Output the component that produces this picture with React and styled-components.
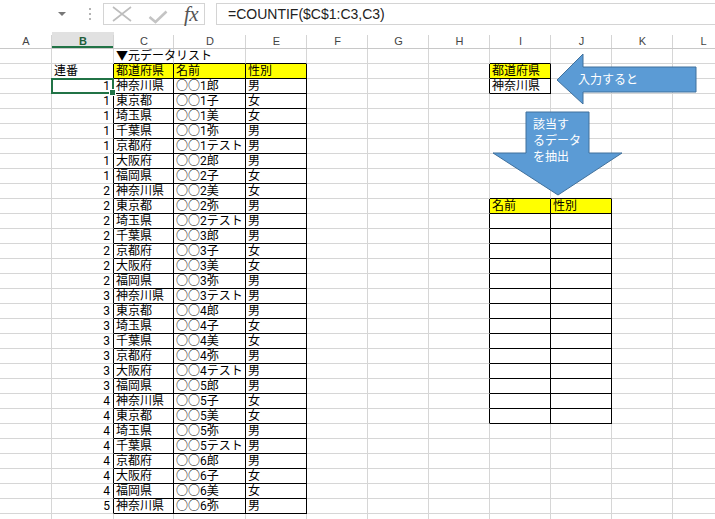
import React from 'react'
import styled, { createGlobalStyle } from 'styled-components'

const COLS = [52, 62, 60, 72, 61, 61, 61, 61, 61, 61, 61, 61]
const LETTERS = ['A', 'B', 'C', 'D', 'E', 'F', 'G', 'H', 'I', 'J', 'K', 'L']
const TEMPLATE = COLS.map((w) => w + 'px').join(' ')
const ROWS = 32
const GRID = '#d6d6d6'
const CELL_FONT = 'Roboto, "Noto Sans CJK JP", sans-serif'

const DATA = [
  [1, '神奈川県', '○○1郎', '男'],
  [1, '東京都', '○○1子', '女'],
  [1, '埼玉県', '○○1美', '女'],
  [1, '千葉県', '○○1弥', '男'],
  [1, '京都府', '○○1テスト', '男'],
  [1, '大阪府', '○○2郎', '男'],
  [1, '福岡県', '○○2子', '女'],
  [2, '神奈川県', '○○2美', '女'],
  [2, '東京都', '○○2弥', '男'],
  [2, '埼玉県', '○○2テスト', '男'],
  [2, '千葉県', '○○3郎', '男'],
  [2, '京都府', '○○3子', '女'],
  [2, '大阪府', '○○3美', '女'],
  [2, '福岡県', '○○3弥', '男'],
  [3, '神奈川県', '○○3テスト', '男'],
  [3, '東京都', '○○4郎', '男'],
  [3, '埼玉県', '○○4子', '女'],
  [3, '千葉県', '○○4美', '女'],
  [3, '京都府', '○○4弥', '男'],
  [3, '大阪府', '○○4テスト', '男'],
  [3, '福岡県', '○○5郎', '男'],
  [4, '神奈川県', '○○5子', '女'],
  [4, '東京都', '○○5美', '女'],
  [4, '埼玉県', '○○5弥', '男'],
  [4, '千葉県', '○○5テスト', '男'],
  [4, '京都府', '○○6郎', '男'],
  [4, '大阪府', '○○6子', '女'],
  [4, '福岡県', '○○6美', '女'],
  [5, '神奈川県', '○○6弥', '男'],
]

// sheet contents keyed by "row,col" (rows start at 1, col 0 = A)
const cells = {}
const put = (r, c, v) => {
  cells[`${r},${c}`] = v
}
put(1, 2, { text: '▼元データリスト' })
put(2, 1, { text: '連番' })
;['都道府県', '名前', '性別'].forEach((t, i) => put(2, 2 + i, { text: t, fill: true, boxed: true }))
DATA.forEach(([n, pref, name, sex], i) => {
  const r = 3 + i
  put(r, 1, { text: String(n), right: true })
  put(r, 2, { text: pref, boxed: true })
  put(r, 3, { text: name, boxed: true })
  put(r, 4, { text: sex, boxed: true })
})
put(2, 8, { text: '都道府県', fill: true, boxed: true })
put(3, 8, { text: '神奈川県', boxed: true })
put(11, 8, { text: '名前', fill: true, boxed: true })
put(11, 9, { text: '性別', fill: true, boxed: true })
for (let r = 12; r <= 25; r++) {
  put(r, 8, { text: '', boxed: true })
  put(r, 9, { text: '', boxed: true })
}
const boxed = (r, c) => Boolean(cells[`${r},${c}`] && cells[`${r},${c}`].boxed)

const GlobalStyle = createGlobalStyle`
  html, body {
    margin: 0;
    padding: 0;
    background: #fff;
  }
  body {
    width: 715px;
    height: 519px;
    overflow: hidden;
    font-family: ${CELL_FONT};
  }
`

const Page = styled.div`
  display: flex;
  flex-direction: column;
  width: 715px;
  height: 519px;
  overflow: hidden;
`

const FormulaBar = styled.div`
  display: flex;
  align-items: flex-start;
  height: 32px;
  padding-top: 3px;
  box-sizing: border-box;
  flex-shrink: 0;
`

const NameBox = styled.div`
  width: 76px;
  height: 22px;
  display: flex;
  align-items: center;
  justify-content: flex-end;
  padding-right: 10px;
  box-sizing: border-box;
`

const Grip = styled.div`
  width: 27px;
  height: 22px;
  display: flex;
  flex-direction: column;
  align-items: center;
  justify-content: center;
  gap: 3px;
`

const GripDot = styled.span`
  width: 2px;
  height: 2px;
  background: #b4b4b4;
`

const FuncBox = styled.div`
  width: 102px;
  height: 22px;
  border: 1px solid #d4d4d4;
  box-sizing: border-box;
  display: flex;
  align-items: center;
  padding-left: 8px;
  gap: 16px;
`

const Fx = styled.span`
  font-family: "Liberation Serif", serif;
  font-style: italic;
  font-size: 21px;
  line-height: 20px;
  color: #555;
  letter-spacing: -0.5px;
`

const FormulaInput = styled.div`
  margin-left: 11px;
  flex: 1;
  height: 22px;
  border: 1px solid #d4d4d4;
  border-right: none;
  box-sizing: border-box;
  padding-left: 11px;
  font-family: "Liberation Sans", Arial, sans-serif;
  font-size: 14px;
  line-height: 20px;
  color: #222;
  white-space: nowrap;
`

const HeaderRow = styled.div`
  display: grid;
  grid-template-columns: ${TEMPLATE};
  height: 17px;
  box-sizing: border-box;
  border-bottom: 1px solid #c8c8c8;
  flex-shrink: 0;
`

const HeaderCell = styled.div`
  position: relative;
  display: flex;
  align-items: center;
  justify-content: center;
  padding-top: 2px;
  font-family: "Liberation Sans", Arial, sans-serif;
  font-size: 11px;
  font-weight: ${(p) => (p.$active ? 'bold' : 'normal')};
  color: ${(p) => (p.$active ? '#1e5e3a' : '#444')};
  background: ${(p) => (p.$active ? '#e1e1e1' : '#fff')};
  box-shadow: ${(p) => (p.$active ? 'inset 0 -2px 0 #217346' : 'none')};
  &::after {
    content: '';
    position: absolute;
    right: 0;
    top: 3px;
    bottom: 0;
    width: 1px;
    background: #d4d4d4;
  }
`

const Body = styled.div`
  position: relative;
  display: grid;
  grid-template-columns: ${TEMPLATE};
  grid-auto-rows: 15px;
`

const Cell = styled.div`
  position: relative;
  box-sizing: border-box;
  border-right: 1px solid ${(p) => (p.$rb ? '#000' : GRID)};
  border-bottom: 1px solid ${(p) => (p.$bb ? '#000' : GRID)};
  background: ${(p) => (p.$fill ? '#ffff00' : 'transparent')};
  padding: 0 ${(p) => (p.$right ? '3px' : '0')} 0 2px;
  text-align: ${(p) => (p.$right ? 'right' : 'left')};
  font-family: ${CELL_FONT};
  font-size: 12px;
  line-height: 14px;
  white-space: nowrap;
  color: #000;
`

const Selection = styled.div`
  position: absolute;
  left: -1px;
  top: -1px;
  right: -1px;
  bottom: -1px;
  border: 2px solid #217346;
  pointer-events: none;
  z-index: 2;
  &::after {
    content: '';
    position: absolute;
    right: -4px;
    bottom: -4px;
    width: 5px;
    height: 5px;
    background: #217346;
    border: 1px solid #fff;
  }
`

const Shape = styled.div`
  position: absolute;
  left: ${(p) => p.$x}px;
  top: ${(p) => p.$y}px;
  width: ${(p) => p.$w}px;
  height: ${(p) => p.$h}px;
  z-index: 3;
  svg {
    position: absolute;
    inset: 0;
  }
`

const ShapeLabel = styled.div`
  position: absolute;
  left: ${(p) => p.$x}px;
  top: ${(p) => p.$y}px;
  color: #fff;
  font-family: ${CELL_FONT};
  font-size: 12px;
  line-height: 16px;
  white-space: nowrap;
`

const Arrow = ({ x, y, w, h, points, label, lx, ly }) => (
  <Shape $x={x} $y={y} $w={w} $h={h}>
    <svg width={w} height={h} viewBox={`0 0 ${w} ${h}`}>
      <polygon points={points} fill='#5b9bd5' stroke='#41719c' strokeWidth='1' />
    </svg>
    <ShapeLabel $x={lx} $y={ly}>
      {label.map((line) => (
        <div key={line}>{line}</div>
      ))}
    </ShapeLabel>
  </Shape>
)

const App = () => {
  const rows = []
  for (let r = 1; r <= ROWS; r++) {
    for (let c = 0; c < COLS.length; c++) {
      const cell = cells[`${r},${c}`] || {}
      rows.push(
        <Cell
          key={`${r}-${c}`}
          $rb={boxed(r, c) || boxed(r, c + 1)}
          $bb={boxed(r, c) || boxed(r + 1, c)}
          $fill={cell.fill}
          $right={cell.right}
        >
          {cell.text}
          {r === 3 && c === 1 && <Selection />}
        </Cell>
      )
    }
  }

  return (
    <Page>
      <GlobalStyle />
      <FormulaBar>
        <NameBox>
          <svg width='8' height='4' viewBox='0 0 8 4'>
            <polygon points='0,0 8,0 4,4' fill='#777' />
          </svg>
        </NameBox>
        <Grip>
          <GripDot />
          <GripDot />
          <GripDot />
        </Grip>
        <FuncBox>
          <svg width='20' height='16' viewBox='0 0 20 16'>
            <path d='M1 1 L19 15 M19 1 L1 15' stroke='#bdbdbd' strokeWidth='1.6' fill='none' />
          </svg>
          <svg width='20' height='14' viewBox='0 0 20 14' style={{ marginTop: 5 }}>
            <path d='M1.5 7 L7.5 12 L18.5 1.5' stroke='#c4c4c4' strokeWidth='2.6' fill='none' />
          </svg>
          <Fx>fx</Fx>
        </FuncBox>
        <FormulaInput>=COUNTIF($C$1:C3,C3)</FormulaInput>
      </FormulaBar>
      <HeaderRow>
        {LETTERS.map((l) => (
          <HeaderCell key={l} $active={l === 'B'}>
            {l}
          </HeaderCell>
        ))}
      </HeaderRow>
      <Body>
        {rows}
        <Arrow
          x={556}
          y={4}
          w={142}
          h={52}
          points='1,27 27,1 27,14 140,14 140,39 27,39 27,51'
          label={['入力すると']}
          lx={22}
          ly={19}
        />
        <Arrow
          x={492}
          y={62}
          w={131}
          h={86}
          points='34,1 97,1 97,42 130,42 66,84 1,42 34,42'
          label={['該当す', 'るデータ', 'を抽出']}
          lx={41}
          ly={6}
        />
      </Body>
    </Page>
  )
}

export default App
